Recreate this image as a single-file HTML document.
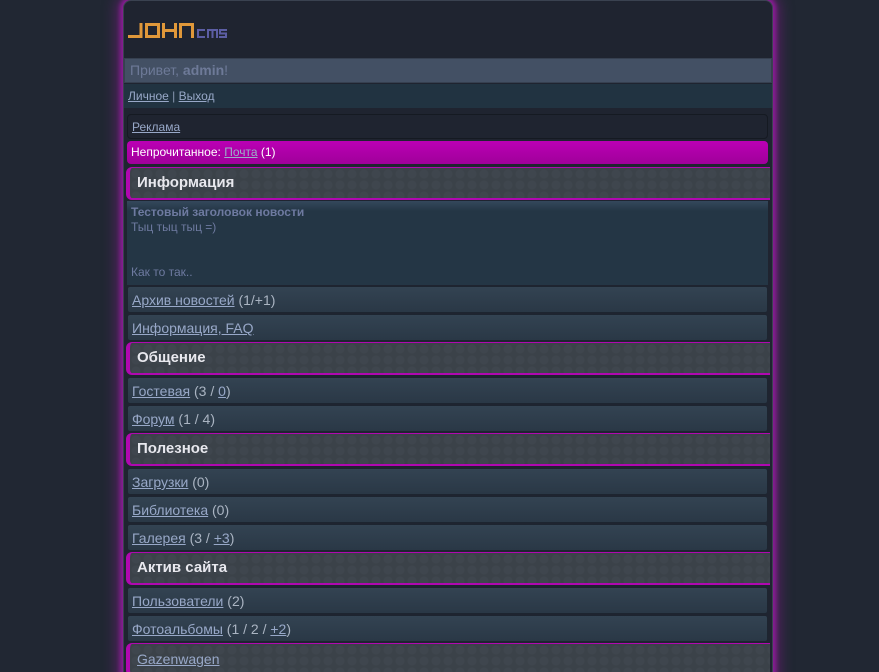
<!DOCTYPE html>
<html><head><meta charset="utf-8">
<style>
html,body{margin:0;padding:0;width:879px;height:672px;overflow:hidden;}
body{background:#212733;font-family:"Liberation Sans",sans-serif;font-size:13px;position:relative;}
#wrap{position:absolute;left:123px;top:0;width:648px;height:700px;background:#1f2430;border:1px solid #3a4250;border-radius:8px;box-shadow:0 0 4px 3px #8a1d95,0 0 14px 6px rgba(140,30,150,.55);}
.a{position:absolute;left:127px;width:641px;box-sizing:border-box;}
a{color:#98a8c8;text-decoration:underline;}
.row{background:linear-gradient(#334352,#2a3846);border:1px solid #1d2530;border-radius:3px;height:27px;line-height:26px;padding-left:4px;font-size:14px;color:#aab4c2;}
.hd{left:126px;width:644px;height:33px;border-left:4px solid #b008b0;border-bottom:2px solid #b008b0;border-top:1px solid #b008b0;border-radius:6px 0 0 6px;background-color:#3b4249;background-image:radial-gradient(circle at 6px 6px,#3f464e 4px,transparent 5px);background-size:12px 11px;color:#e8e8ee;font-weight:bold;font-size:15px;line-height:30px;padding-left:7px;}
</style></head><body>
<div id="wrap"></div>
<svg style="position:absolute;left:0;top:0" width="879" height="60">
<g fill="none" stroke="#e0983a" stroke-width="3">
<polyline points="128,36.5 141,36.5 141,23"/>
<polyline points="146.5,23 146.5,36.5 158.5,36.5 158.5,24.5 145,24.5"/>
<path d="M163.5,23V38 M175.5,23V38 M163.5,30.5H175.5"/>
<polyline points="180.5,38 180.5,24.5 192.5,24.5 192.5,38"/>
</g>
<g fill="none" stroke="#5c5ea4" stroke-width="2">
<polyline points="205,30 198,30 198,37 205,37"/>
<polyline points="208,38 208,30 217,30 217,38"/>
<path d="M212.5,30V38"/>
<polyline points="227,30 220,30 220,33.5 226,33.5 226,37 219,37"/>
</g>
</svg>
<div class="a" style="left:124px;width:648px;top:58px;height:25px;background:#435064;border:1px solid #364050;color:#6e7a98;font-size:14px;line-height:23px;padding-left:5px;">Привет, <b>admin</b>!</div>
<div class="a" style="left:124px;width:648px;top:84px;height:24px;background:#213341;line-height:24px;padding-left:4px;font-size:12px;color:#8898b0;"><a href="#">Личное</a> | <a href="#">Выход</a></div>
<div class="a" style="top:114px;height:25px;background:#1f2430;border:1px solid #151a22;border-radius:4px;line-height:24px;padding-left:4px;font-size:12px;"><a href="#">Реклама</a></div>
<div class="a" style="top:141px;height:23px;background:linear-gradient(#bb00b5,#a0009a);border-radius:4px;line-height:23px;padding-left:4px;font-size:12px;color:#fff;">Непрочитанное: <a href="#" style="color:#9ab0c8">Почта</a> (1)</div>
<div class="a hd" style="top:167px;">Информация</div>
<div class="a" style="top:201px;height:84px;background:linear-gradient(#34485c,#243645 12%,#243645);padding:4px 4px;font-size:12px;color:#6e7aa0;line-height:15px;"><b>Тестовый заголовок новости</b><br>Тыц тыц тыц =)<br><br><br>Как то так..</div>
<div class="a row" style="top:286px;"><a href="#">Архив новостей</a> (1/+1)</div>
<div class="a row" style="top:314px;"><a href="#">Информация, FAQ</a></div>
<div class="a hd" style="top:342px;">Общение</div>
<div class="a row" style="top:377px;"><a href="#">Гостевая</a> (3 / <a href="#">0</a>)</div>
<div class="a row" style="top:405px;"><a href="#">Форум</a> (1 / 4)</div>
<div class="a hd" style="top:433px;">Полезное</div>
<div class="a row" style="top:468px;"><a href="#">Загрузки</a> (0)</div>
<div class="a row" style="top:496px;"><a href="#">Библиотека</a> (0)</div>
<div class="a row" style="top:524px;"><a href="#">Галерея</a> (3 / <a href="#">+3</a>)</div>
<div class="a hd" style="top:552px;">Актив сайта</div>
<div class="a row" style="top:587px;"><a href="#">Пользователи</a> (2)</div>
<div class="a row" style="top:615px;"><a href="#">Фотоальбомы</a> (1 / 2 / <a href="#">+2</a>)</div>
<div class="a hd" style="top:643px;font-weight:normal;font-size:14px;"><a href="#">Gazenwagen</a></div>
</body></html>
